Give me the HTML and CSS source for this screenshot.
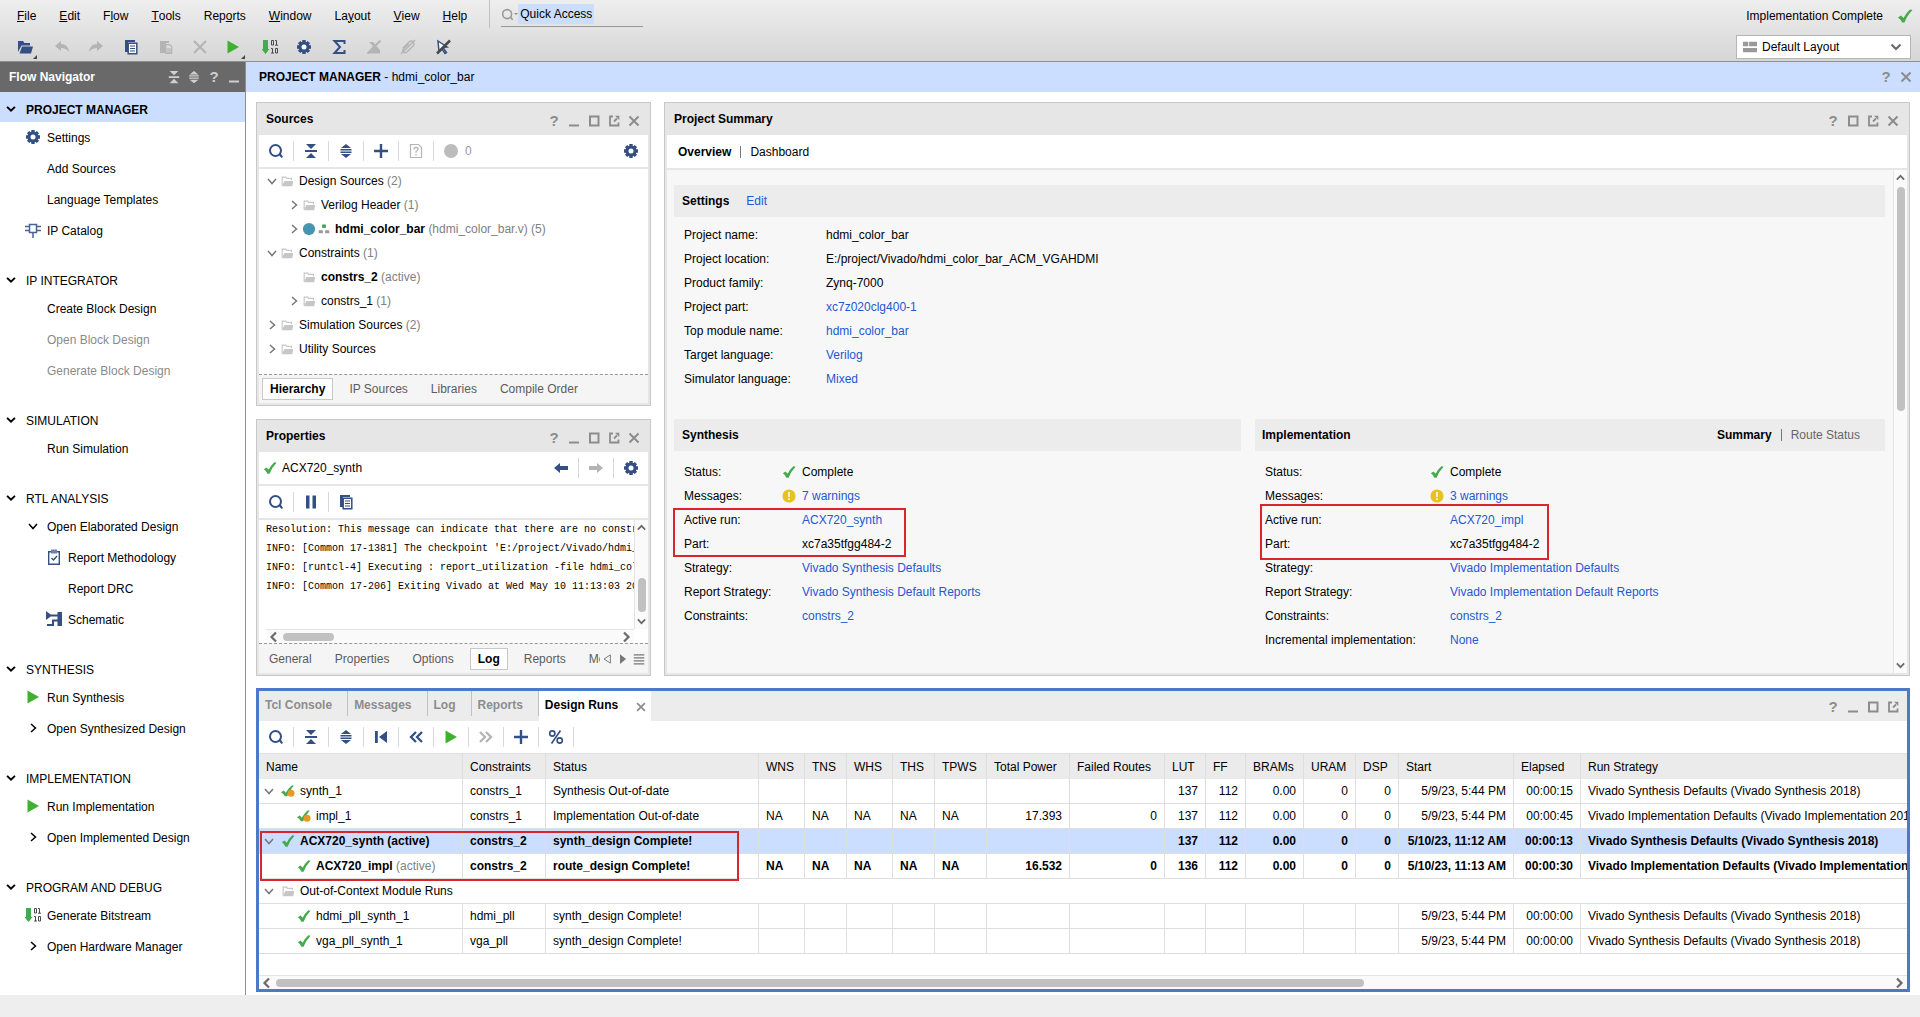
FILE: index.html
```html
<!DOCTYPE html>
<html lang="en">
<head>
<meta charset="utf-8">
<title>hdmi_color_bar - Vivado</title>
<link rel="stylesheet" href="styles.css">
</head>
<body>
<svg class="sprite" aria-hidden="true">
  <symbol id="min" viewBox="0 0 16 16"><path d="M3 12.500h10" stroke="currentColor" stroke-width="2" fill="none"/></symbol>
  <symbol id="max" viewBox="0 0 16 16"><rect x="4" y="3.500" width="8.500" height="9" stroke="currentColor" stroke-width="2" fill="none"/></symbol>
  <symbol id="float" viewBox="0 0 16 16"><path d="M7 3.500H4v9h8.500V9.500M8 8.500l3-3" stroke="currentColor" stroke-width="1.800" fill="none"/><path d="M9 2.700h4.300V7z" fill="currentColor"/></symbol>
  <symbol id="close" viewBox="0 0 16 16"><path d="M3.500 3.500l9 9M12.500 3.500l-9 9" stroke="currentColor" stroke-width="2" fill="none"/></symbol>
  <symbol id="search" viewBox="0 0 16 16"><circle cx="7.500" cy="7.500" r="5.500" stroke="currentColor" stroke-width="2" fill="none"/><path d="M10.500 11.500l2-1.500 2.500 4-1.500 1z" fill="currentColor"/></symbol>
  <symbol id="collapse" viewBox="0 0 16 16"><path d="M3 1h10L8 6zM3 15h10L8 10zM2 7h12v2H2z" fill="currentColor"/></symbol>
  <symbol id="expand" viewBox="0 0 16 16"><path d="M8 1l5 4H3zM8 15l5-4H3zM2.500 6h11v1.500h-11zM2.500 8.500h11V10h-11z" fill="currentColor"/></symbol>
  <symbol id="plus" viewBox="0 0 16 16"><path d="M8 1v14M1 8h14" stroke="currentColor" stroke-width="2.400" fill="none"/></symbol>
  <symbol id="helpdoc" viewBox="0 0 16 16"><path d="M2.500 1.500h8l3 3v10h-11z" stroke="currentColor" stroke-width="1.200" fill="none"/><path d="M6 6.500Q6 4.500 8 4.500t2 1.700Q10 7.500 8 8.500v1.200M8 11v1.500" stroke="currentColor" stroke-width="1.300" fill="none"/></symbol>
  <symbol id="gear" viewBox="0 0 16 16"><path d="M6.300 1h3.400v14H6.300zM1 6.300h14v3.400H1zM1.900 4.300l2.400-2.400 9.800 9.800-2.400 2.400zM11.700 1.900l2.400 2.400-9.800 9.800-2.400-2.400z" fill="currentColor"/><circle cx="8" cy="8" r="4" stroke="currentColor" stroke-width="3.200" fill="none"/><circle cx="8" cy="8" r="2.500" fill="#fff"/></symbol>
  <symbol id="dot" viewBox="0 0 16 16"><circle cx="8" cy="8" r="7" fill="currentColor"/></symbol>
  <symbol id="folder" viewBox="0 0 16 16"><path d="M2.500 13V3.500h4l1 1.500h5.500v2" stroke="#c6c6c6" stroke-width="1.300" fill="none"/><path d="M2 14l3-6h10l-1 6z" fill="#c6c6c6"/></symbol>
  <symbol id="down" viewBox="0 0 16 16"><path d="M4 6l4 4.500L12 6" stroke="currentColor" stroke-width="1.500" fill="none"/></symbol>
  <symbol id="right" viewBox="0 0 16 16"><path d="M6 4l4.500 4L6 12" stroke="currentColor" stroke-width="1.500" fill="none"/></symbol>
  <symbol id="down-bold" viewBox="0 0 16 16"><path d="M3.500 5.500l4.500 4.500 4.500-4.500" stroke="currentColor" stroke-width="2.200" fill="none"/></symbol>
  <symbol id="up-bold" viewBox="0 0 16 16"><path d="M3.500 10.500L8 6l4.500 4.500" stroke="currentColor" stroke-width="2.200" fill="none"/></symbol>
  <symbol id="left-bold" viewBox="0 0 16 16"><path d="M10 3.500L5.500 8l4.500 4.500" stroke="currentColor" stroke-width="2.200" fill="none"/></symbol>
  <symbol id="right-bold" viewBox="0 0 16 16"><path d="M6 3.500L10.500 8 6 12.500" stroke="currentColor" stroke-width="2.200" fill="none"/></symbol>
  <symbol id="check" viewBox="0 0 16 16"><path d="M1 9.500l3-2 2.500 2.500Q9 5 13 1.500l2.500.5Q10 7.500 7.500 14.500H5Q3.500 11 1 9.500z" fill="#45a94d"/></symbol>
  <symbol id="stale" viewBox="0 0 16 16"><path d="M0 9.500l3-2L5.500 10Q8.500 5 12.500 1.500l2 .5Q9.500 7.500 7 14H4.500Q3 11 0 9.500z" fill="#45a94d"/><circle cx="11.500" cy="10.500" r="4" fill="#e59a28"/></symbol>
  <symbol id="warn" viewBox="0 0 16 16"><circle cx="8" cy="8" r="7.500" fill="#e8c31d"/><path d="M8 3.500v5.500M8 10.500v2" stroke="#fff" stroke-width="1.800"/></symbol>
  <symbol id="top" viewBox="0 0 16 16"><rect x="5.500" y="2" width="5" height="4.500" fill="#3fa34d"/><path d="M1 9.500h5.500v4H1zM9.500 9.500H15v4H9.500z" fill="#999"/></symbol>
  <symbol id="back" viewBox="0 0 16 16"><path d="M1 8l6-5v3h8v4H7v3z" fill="currentColor"/></symbol>
  <symbol id="fwd" viewBox="0 0 16 16"><path d="M15 8L9 3v3H1v4h8v3z" fill="currentColor"/></symbol>
  <symbol id="pause" viewBox="0 0 16 16"><path d="M3 1.500h3.500v13H3zM9.500 1.500H13v13H9.500z" fill="currentColor"/></symbol>
  <symbol id="copy" viewBox="0 0 16 16"><path d="M2 1h10v2H5v10H2z" fill="currentColor"/><path d="M5.200 4.200h8.600v10.600H5.200z" stroke="currentColor" stroke-width="1.500" fill="#fff"/><path d="M7 7h5M7 9.500h5M7 12h5" stroke="currentColor" stroke-width="1.200"/></symbol>
  <symbol id="paste" viewBox="0 0 16 16"><path d="M2 2h9v2H8v10H2z" fill="currentColor"/><path d="M7.700 5.700h4l2 2v6.600h-6z" stroke="currentColor" stroke-width="1.200" fill="none"/><path d="M8.500 9h5v5.500h-5z" fill="currentColor" opacity=".6"/></symbol>
  <symbol id="first" viewBox="0 0 16 16"><path d="M2 2h2.800v12H2zM14 2v12L6 8z" fill="currentColor"/></symbol>
  <symbol id="rew" viewBox="0 0 16 16"><path d="M8 3L3 8l5 5M14 3L9 8l5 5" stroke="currentColor" stroke-width="2.300" fill="none"/></symbol>
  <symbol id="ffwd" viewBox="0 0 16 16"><path d="M2 3l5 5-5 5M8 3l5 5-5 5" stroke="currentColor" stroke-width="2.300" fill="none"/></symbol>
  <symbol id="play" viewBox="0 0 16 16"><path d="M2.500 1.500L14 8 2.500 14.500z" fill="#3fb02f"/></symbol>
  <symbol id="percent" viewBox="0 0 16 16"><g stroke="currentColor" fill="none" stroke-width="1.600"><circle cx="4.300" cy="4.500" r="2.600"/><circle cx="11.700" cy="11.500" r="2.600"/><path d="M12.500 1.500l-9 13"/></g></symbol>
  <symbol id="open" viewBox="0 0 16 16"><path d="M1 13V2h5l1.500 2H13v2.500H4.500z" fill="currentColor"/><path d="M2.500 14.500L5 7.500h11l-2 7z" fill="currentColor"/></symbol>
  <symbol id="undo" viewBox="0 0 16 16"><path d="M1 7l6-5v3q7 0 8 8-3-4-8-4v3z" fill="currentColor"/></symbol>
  <symbol id="redo" viewBox="0 0 16 16"><path d="M15 7L9 2v3Q2 5 1 13q3-4 8-4v3z" fill="currentColor"/></symbol>
  <symbol id="delete" viewBox="0 0 16 16"><path d="M2 2l12 12M14 2L2 14" stroke="currentColor" stroke-width="2.200"/></symbol>
  <symbol id="bits" viewBox="0 0 16 16"><path d="M1 1h5v9h1.500l-4 5-4-5H1z" fill="#45a94d"/><path d="M9.500 1.500h2v4.500h-2zM13 1.500h1.500V6M13 6.200h3M9 9.500h1.500V14M9 14h3M13.500 9.500h2V14h-2z" stroke="#4b4b4b" stroke-width="1" fill="none"/></symbol>
  <symbol id="sigma" viewBox="0 0 16 16"><path d="M13.500 5V2H3.500l5.500 6-5.500 6h10v-3" stroke="currentColor" stroke-width="2" fill="none"/></symbol>
  <symbol id="unroute" viewBox="0 0 16 16"><path d="M2 14.500L7 7 3 3h4l7 8v3.500z" fill="currentColor"/><path d="M14.500 1.500l-13 13" stroke="currentColor" stroke-width="2"/></symbol>
  <symbol id="clip" viewBox="0 0 16 16"><path d="M3 9l6-6q2-2 4 0t0 4l-6 6q-2 1.500-3.500 0T3.500 10L9 4.500" stroke="currentColor" stroke-width="1.500" fill="none"/><path d="M15 1L1 15" stroke="currentColor" stroke-width="1.500"/></symbol>
  <symbol id="nocursor" viewBox="0 0 16 16"><path d="M3 2l9 6-4 .5 3.500 5-1.500 1L7 10l-3 2.500z" fill="#fff" stroke="#33507f" stroke-width="1.500"/><path d="M15 1.500L2 14.500" stroke="#484848" stroke-width="2.500"/></symbol>
  <symbol id="layout" viewBox="0 0 16 16"><path d="M0 2h6v5H0zM7 2h9v5H7zM0 9h16v5H0z" fill="#999"/></symbol>
  <symbol id="chip" viewBox="0 0 16 16"><path d="M4.500 2.500h7v8h-7zM0 4.500h4.500M0 8.500h4.500M11.500 4.500H16M11.500 8.500H16M8 10.500V16" stroke="#4a6391" stroke-width="1.500" fill="none"/></symbol>
  <symbol id="clipboard" viewBox="0 0 16 16"><path d="M2.700 2.700h10.600v12.600H2.700z" stroke="#33507f" stroke-width="1.400" fill="none"/><path d="M5 .500h6v4H5z" fill="#6f84aa"/><path d="M5.500 9l2 2 3.500-4" stroke="#33507f" stroke-width="1.400" fill="none"/></symbol>
  <symbol id="schematic" viewBox="0 0 16 16"><path d="M0 0l6 4.500L0 9zM11.500 1H16v14h-4.500z" fill="#33507f"/><path d="M5 4.500h7M1 14h6V9.500h5" stroke="#33507f" stroke-width="2" fill="none"/></symbol>
  <symbol id="lines" viewBox="0 0 16 16"><path d="M1 2.500h14M1 6.500h14M1 10.500h14M1 14.500h14" stroke="currentColor" stroke-width="1.800"/></symbol>
  <symbol id="tri-left" viewBox="0 0 16 16"><path d="M12.500 2.500v11L4 8z" stroke="currentColor" stroke-width="1.300" fill="none"/></symbol>
  <symbol id="tri-right" viewBox="0 0 16 16"><path d="M4 1.500v13L12 8z" fill="currentColor"/></symbol>
</svg>

<header class="top">
  <div class="menu-row">
    <nav class="menus" aria-label="Main menu">
      <button><u>F</u>ile</button><button><u>E</u>dit</button><button>F<u>l</u>ow</button><button><u>T</u>ools</button><button>Rep<u>o</u>rts</button><button><u>W</u>indow</button><button>La<u>y</u>out</button><button><u>V</u>iew</button><button><u>H</u>elp</button>
    </nav>
    <label class="quick"><svg class="icon"><use href="#search"/></svg><span class="caret"></span><input type="text" value="Quick Access" aria-label="Quick Access"></label>
    <div class="run-state">Implementation Complete <svg class="icon"><use href="#check"/></svg></div>
  </div>
  <div class="tool-row">
    <div class="tools">
      <button class="more" aria-label="Open"><svg class="icon"><use href="#open"/></svg></button>
      <button class="off" aria-label="Undo"><svg class="icon"><use href="#undo"/></svg></button>
      <button class="off" aria-label="Redo"><svg class="icon"><use href="#redo"/></svg></button>
      <button aria-label="Copy"><svg class="icon"><use href="#copy"/></svg></button>
      <button class="off" aria-label="Paste"><svg class="icon"><use href="#paste"/></svg></button>
      <button class="off" aria-label="Delete"><svg class="icon"><use href="#delete"/></svg></button>
      <button class="more" aria-label="Run"><svg class="icon"><use href="#play"/></svg></button>
      <button aria-label="Generate Bitstream"><svg class="icon"><use href="#bits"/></svg></button>
      <button aria-label="Settings"><svg class="icon"><use href="#gear"/></svg></button>
      <button aria-label="Report"><svg class="icon"><use href="#sigma"/></svg></button>
      <button class="off" aria-label="Unroute"><svg class="icon"><use href="#unroute"/></svg></button>
      <button class="off" aria-label="Unlink"><svg class="icon"><use href="#clip"/></svg></button>
      <button aria-label="Clear selection"><svg class="icon"><use href="#nocursor"/></svg></button>
    </div>
    <div class="layout-pick">
      <svg class="icon"><use href="#layout"/></svg>
      <select aria-label="Layout"><option>Default Layout</option></select>
      <svg class="icon arrow"><use href="#down-bold"/></svg>
    </div>
  </div>
</header>

<div class="body">
  <aside class="flow">
    <div class="flow-head"><h2>Flow Navigator</h2>
      <button aria-label="Collapse all"><svg class="icon small"><use href="#collapse"/></svg></button>
      <button aria-label="Expand all"><svg class="icon small"><use href="#expand"/></svg></button>
      <button class="ask" aria-label="Help">?</button>
      <button aria-label="Minimize"><svg class="icon"><use href="#min"/></svg></button>
    </div>
    <nav class="flow-list" aria-label="Flow Navigator">
      <section class="current">
        <button class="group"><svg class="icon"><use href="#down-bold"/></svg>PROJECT MANAGER</button>
        <button><svg class="icon navy"><use href="#gear"/></svg>Settings</button>
        <button><i class="icon"></i>Add Sources</button>
        <button><i class="icon"></i>Language Templates</button>
        <button><svg class="icon"><use href="#chip"/></svg>IP Catalog</button>
      </section>
      <section>
        <button class="group"><svg class="icon"><use href="#down-bold"/></svg>IP INTEGRATOR</button>
        <button><i class="icon"></i>Create Block Design</button>
        <button disabled><i class="icon"></i>Open Block Design</button>
        <button disabled><i class="icon"></i>Generate Block Design</button>
      </section>
      <section>
        <button class="group"><svg class="icon"><use href="#down-bold"/></svg>SIMULATION</button>
        <button><i class="icon"></i>Run Simulation</button>
      </section>
      <section>
        <button class="group"><svg class="icon"><use href="#down-bold"/></svg>RTL ANALYSIS</button>
        <button><svg class="icon"><use href="#down"/></svg>Open Elaborated Design</button>
        <button class="sub"><svg class="icon"><use href="#clipboard"/></svg>Report Methodology</button>
        <button class="sub"><i class="icon"></i>Report DRC</button>
        <button class="sub"><svg class="icon"><use href="#schematic"/></svg>Schematic</button>
      </section>
      <section>
        <button class="group"><svg class="icon"><use href="#down-bold"/></svg>SYNTHESIS</button>
        <button><svg class="icon"><use href="#play"/></svg>Run Synthesis</button>
        <button><svg class="icon"><use href="#right"/></svg>Open Synthesized Design</button>
      </section>
      <section>
        <button class="group"><svg class="icon"><use href="#down-bold"/></svg>IMPLEMENTATION</button>
        <button><svg class="icon"><use href="#play"/></svg>Run Implementation</button>
        <button><svg class="icon"><use href="#right"/></svg>Open Implemented Design</button>
      </section>
      <section>
        <button class="group"><svg class="icon"><use href="#down-bold"/></svg>PROGRAM AND DEBUG</button>
        <button><svg class="icon"><use href="#bits"/></svg>Generate Bitstream</button>
        <button><svg class="icon"><use href="#right"/></svg>Open Hardware Manager</button>
      </section>
    </nav>
  </aside>

  <main>
    <div class="main-head">
      <h1><b>PROJECT MANAGER</b> - hdmi_color_bar</h1>
      <button class="ask" aria-label="Help">?</button>
      <button aria-label="Close"><svg class="icon"><use href="#close"/></svg></button>
    </div>
    <div class="work">
      <div class="upper">
        <div class="left-col">
          <section class="panel">
            <div class="panel-head"><h2>Sources</h2>
              <div class="win"><button class="ask" aria-label="Help">?</button><button aria-label="Minimize"><svg class="icon"><use href="#min"/></svg></button><button aria-label="Maximize"><svg class="icon"><use href="#max"/></svg></button><button aria-label="Float"><svg class="icon"><use href="#float"/></svg></button><button aria-label="Close"><svg class="icon"><use href="#close"/></svg></button></div>
            </div>
            <div class="bar">
              <button aria-label="Search"><svg class="icon"><use href="#search"/></svg></button>
              <button aria-label="Collapse all"><svg class="icon"><use href="#collapse"/></svg></button>
              <button aria-label="Expand all"><svg class="icon"><use href="#expand"/></svg></button>
              <button aria-label="Add"><svg class="icon"><use href="#plus"/></svg></button>
              <button class="off" aria-label="Missing sources"><svg class="icon"><use href="#helpdoc"/></svg></button>
              <button class="off count"><svg class="icon"><use href="#dot"/></svg>0</button>
              <button class="end" aria-label="Settings"><svg class="icon"><use href="#gear"/></svg></button>
            </div>
            <ul class="tree">
              <li><svg class="icon tw"><use href="#down"/></svg><svg class="icon small"><use href="#folder"/></svg><span>Design Sources <em>(2)</em></span></li>
              <li class="in"><svg class="icon tw"><use href="#right"/></svg><svg class="icon small"><use href="#folder"/></svg><span>Verilog Header <em>(1)</em></span></li>
              <li class="in"><svg class="icon tw"><use href="#right"/></svg><svg class="icon small teal"><use href="#dot"/></svg><svg class="icon mini"><use href="#top"/></svg><span><b>hdmi_color_bar</b> <em>(hdmi_color_bar.v) (5)</em></span></li>
              <li><svg class="icon tw"><use href="#down"/></svg><svg class="icon small"><use href="#folder"/></svg><span>Constraints <em>(1)</em></span></li>
              <li class="in"><i class="icon tw"></i><svg class="icon small"><use href="#folder"/></svg><span><b>constrs_2</b> <em>(active)</em></span></li>
              <li class="in"><svg class="icon tw"><use href="#right"/></svg><svg class="icon small"><use href="#folder"/></svg><span>constrs_1 <em>(1)</em></span></li>
              <li><svg class="icon tw"><use href="#right"/></svg><svg class="icon small"><use href="#folder"/></svg><span>Simulation Sources <em>(2)</em></span></li>
              <li><svg class="icon tw"><use href="#right"/></svg><svg class="icon small"><use href="#folder"/></svg><span>Utility Sources</span></li>
            </ul>
            <div class="foot-tabs"><button class="on">Hierarchy</button><button>IP Sources</button><button>Libraries</button><button>Compile Order</button></div>
          </section>

          <section class="panel grow">
            <div class="panel-head"><h2>Properties</h2>
              <div class="win"><button class="ask" aria-label="Help">?</button><button aria-label="Minimize"><svg class="icon"><use href="#min"/></svg></button><button aria-label="Maximize"><svg class="icon"><use href="#max"/></svg></button><button aria-label="Float"><svg class="icon"><use href="#float"/></svg></button><button aria-label="Close"><svg class="icon"><use href="#close"/></svg></button></div>
            </div>
            <div class="bar">
              <div class="subject"><svg class="icon small"><use href="#check"/></svg>ACX720_synth</div>
              <button aria-label="Back"><svg class="icon"><use href="#back"/></svg></button>
              <button class="off" aria-label="Forward"><svg class="icon"><use href="#fwd"/></svg></button>
              <button class="last" aria-label="Settings"><svg class="icon"><use href="#gear"/></svg></button>
            </div>
            <div class="bar">
              <button aria-label="Search"><svg class="icon"><use href="#search"/></svg></button>
              <button aria-label="Pause"><svg class="icon"><use href="#pause"/></svg></button>
              <button class="last" aria-label="Copy"><svg class="icon"><use href="#copy"/></svg></button>
            </div>
            <div class="log">
              <pre>Resolution: This message can indicate that there are no constraints
INFO: [Common 17-1381] The checkpoint 'E:/project/Vivado/hdmi_color_bar
INFO: [runtcl-4] Executing : report_utilization -file hdmi_color_bar
INFO: [Common 17-206] Exiting Vivado at Wed May 10 11:13:03 2023...</pre>
              <div class="vscroll" aria-hidden="true"><svg class="icon"><use href="#up-bold"/></svg><span class="log-v"></span><svg class="icon"><use href="#down-bold"/></svg></div>
              <div class="hscroll" aria-hidden="true"><svg class="icon"><use href="#left-bold"/></svg><span class="log-h"></span><svg class="icon"><use href="#right-bold"/></svg></div>
            </div>
            <div class="foot-tabs tight"><button>General</button><button>Properties</button><button>Options</button><button class="on">Log</button><button>Reports</button><button class="cut">Messages</button>
              <div class="tab-nav"><button aria-label="Previous tabs"><svg class="icon mini"><use href="#tri-left"/></svg></button><button aria-label="Next tabs"><svg class="icon mini"><use href="#tri-right"/></svg></button><button aria-label="Tab list"><svg class="icon mini"><use href="#lines"/></svg></button></div>
            </div>
          </section>
        </div>

        <section class="panel summary">
          <div class="panel-head"><h2>Project Summary</h2>
            <div class="win"><button class="ask" aria-label="Help">?</button><button aria-label="Maximize"><svg class="icon"><use href="#max"/></svg></button><button aria-label="Float"><svg class="icon"><use href="#float"/></svg></button><button aria-label="Close"><svg class="icon"><use href="#close"/></svg></button></div>
          </div>
          <div class="views"><button class="on">Overview</button><span class="rule"></span><button>Dashboard</button></div>
          <div class="scroller">
            <div class="report">
              <div class="strip"><h3>Settings</h3><a href="#edit">Edit</a></div>
              <dl class="facts wide">
                <dt>Project name:</dt><dd>hdmi_color_bar</dd>
                <dt>Project location:</dt><dd>E:/project/Vivado/hdmi_color_bar_ACM_VGAHDMI</dd>
                <dt>Product family:</dt><dd>Zynq-7000</dd>
                <dt>Project part:</dt><dd><a href="#part">xc7z020clg400-1</a></dd>
                <dt>Top module name:</dt><dd><a href="#top-module">hdmi_color_bar</a></dd>
                <dt>Target language:</dt><dd><a href="#language">Verilog</a></dd>
                <dt>Simulator language:</dt><dd><a href="#simulator">Mixed</a></dd>
              </dl>
              <div class="pair">
                <div class="stage">
                  <div class="strip"><h3>Synthesis</h3></div>
                  <dl class="facts synth">
                    <dt>Status:</dt><dd class="flag"><svg class="icon small"><use href="#check"/></svg>Complete</dd>
                    <dt>Messages:</dt><dd class="flag"><svg class="icon small"><use href="#warn"/></svg><a href="#w7">7 warnings</a></dd>
                    <dt>Active run:</dt><dd><a href="#synth">ACX720_synth</a></dd>
                    <dt>Part:</dt><dd>xc7a35tfgg484-2</dd>
                    <dt>Strategy:</dt><dd><a href="#s1">Vivado Synthesis Defaults</a></dd>
                    <dt>Report Strategy:</dt><dd><a href="#s2">Vivado Synthesis Default Reports</a></dd>
                    <dt>Constraints:</dt><dd><a href="#s3">constrs_2</a></dd>
                  </dl>
                  <span class="mark mark-synth"></span>
                </div>
                <div class="stage">
                  <div class="strip impl-strip"><h3>Implementation</h3><div class="switch"><button class="on">Summary</button><span class="rule"></span><button>Route Status</button></div></div>
                  <dl class="facts impl">
                    <dt>Status:</dt><dd class="flag"><svg class="icon small"><use href="#check"/></svg>Complete</dd>
                    <dt>Messages:</dt><dd class="flag"><svg class="icon small"><use href="#warn"/></svg><a href="#w3">3 warnings</a></dd>
                    <dt>Active run:</dt><dd><a href="#impl">ACX720_impl</a></dd>
                    <dt>Part:</dt><dd>xc7a35tfgg484-2</dd>
                    <dt>Strategy:</dt><dd><a href="#i1">Vivado Implementation Defaults</a></dd>
                    <dt>Report Strategy:</dt><dd><a href="#i2">Vivado Implementation Default Reports</a></dd>
                    <dt>Constraints:</dt><dd><a href="#i3">constrs_2</a></dd>
                    <dt>Incremental implementation:</dt><dd><a href="#i4">None</a></dd>
                  </dl>
                  <span class="mark mark-impl"></span>
                </div>
              </div>
            </div>
            <div class="vscroll" aria-hidden="true"><svg class="icon"><use href="#up-bold"/></svg><span class="sum-v"></span><svg class="icon"><use href="#down-bold"/></svg></div>
          </div>
        </section>
      </div>

      <section class="runs">
        <div class="run-tabs">
          <button>Tcl Console</button><button>Messages</button><button>Log</button><button>Reports</button><button class="on">Design Runs<svg class="icon small"><use href="#close"/></svg></button>
          <div class="win"><button class="ask" aria-label="Help">?</button><button aria-label="Minimize"><svg class="icon"><use href="#min"/></svg></button><button aria-label="Maximize"><svg class="icon"><use href="#max"/></svg></button><button aria-label="Float"><svg class="icon"><use href="#float"/></svg></button></div>
        </div>
        <div class="bar flat">
          <button aria-label="Search"><svg class="icon"><use href="#search"/></svg></button>
          <button aria-label="Collapse all"><svg class="icon"><use href="#collapse"/></svg></button>
          <button aria-label="Expand all"><svg class="icon"><use href="#expand"/></svg></button>
          <button aria-label="First"><svg class="icon"><use href="#first"/></svg></button>
          <button aria-label="Previous"><svg class="icon"><use href="#rew"/></svg></button>
          <button aria-label="Launch"><svg class="icon"><use href="#play"/></svg></button>
          <button class="off" aria-label="Next"><svg class="icon"><use href="#ffwd"/></svg></button>
          <button aria-label="Create runs"><svg class="icon"><use href="#plus"/></svg></button>
          <button aria-label="Show percentage"><svg class="icon"><use href="#percent"/></svg></button>
        </div>
        <div class="grid">
          <table>
            <colgroup><col class="w-name"><col class="w-83"><col class="w-status"><col class="w-46"><col class="w-42"><col class="w-46"><col class="w-42"><col class="w-52"><col class="w-83"><col class="w-95"><col class="w-41"><col class="w-40"><col class="w-58"><col class="w-52"><col class="w-43"><col class="w-start"><col class="w-67"><col></colgroup>
            <thead><tr><th>Name</th><th>Constraints</th><th>Status</th><th>WNS</th><th>TNS</th><th>WHS</th><th>THS</th><th>TPWS</th><th>Total Power</th><th>Failed Routes</th><th>LUT</th><th>FF</th><th>BRAMs</th><th>URAM</th><th>DSP</th><th>Start</th><th>Elapsed</th><th>Run Strategy</th></tr></thead>
            <tbody>
              <tr><td><div class="name"><svg class="icon tw"><use href="#down"/></svg><svg class="icon small"><use href="#stale"/></svg>synth_1</div></td><td>constrs_1</td><td>Synthesis Out-of-date</td><td></td><td></td><td></td><td></td><td></td><td></td><td></td><td class="n">137</td><td class="n">112</td><td class="n">0.00</td><td class="n">0</td><td class="n">0</td><td class="n">5/9/23, 5:44 PM</td><td class="n">00:00:15</td><td>Vivado Synthesis Defaults (Vivado Synthesis 2018)</td></tr>
              <tr><td><div class="name kid"><svg class="icon small"><use href="#stale"/></svg>impl_1</div></td><td>constrs_1</td><td>Implementation Out-of-date</td><td>NA</td><td>NA</td><td>NA</td><td>NA</td><td>NA</td><td class="n">17.393</td><td class="n">0</td><td class="n">137</td><td class="n">112</td><td class="n">0.00</td><td class="n">0</td><td class="n">0</td><td class="n">5/9/23, 5:44 PM</td><td class="n">00:00:45</td><td>Vivado Implementation Defaults (Vivado Implementation 2018)</td></tr>
              <tr class="strong picked"><td><div class="name"><svg class="icon tw"><use href="#down"/></svg><svg class="icon small"><use href="#check"/></svg>ACX720_synth (active)</div></td><td>constrs_2</td><td>synth_design Complete!</td><td></td><td></td><td></td><td></td><td></td><td></td><td></td><td class="n">137</td><td class="n">112</td><td class="n">0.00</td><td class="n">0</td><td class="n">0</td><td class="n">5/10/23, 11:12 AM</td><td class="n">00:00:13</td><td>Vivado Synthesis Defaults (Vivado Synthesis 2018)</td></tr>
              <tr class="strong"><td><div class="name kid"><svg class="icon small"><use href="#check"/></svg><span>ACX720_impl <em>(active)</em></span></div></td><td>constrs_2</td><td>route_design Complete!</td><td>NA</td><td>NA</td><td>NA</td><td>NA</td><td>NA</td><td class="n">16.532</td><td class="n">0</td><td class="n">136</td><td class="n">112</td><td class="n">0.00</td><td class="n">0</td><td class="n">0</td><td class="n">5/10/23, 11:13 AM</td><td class="n">00:00:30</td><td>Vivado Implementation Defaults (Vivado Implementation 2018)</td></tr>
              <tr><td colspan="18"><div class="name"><svg class="icon tw"><use href="#down"/></svg><svg class="icon small"><use href="#folder"/></svg>Out-of-Context Module Runs</div></td></tr>
              <tr><td><div class="name kid"><svg class="icon small"><use href="#check"/></svg>hdmi_pll_synth_1</div></td><td>hdmi_pll</td><td>synth_design Complete!</td><td></td><td></td><td></td><td></td><td></td><td></td><td></td><td></td><td></td><td></td><td></td><td></td><td class="n">5/9/23, 5:44 PM</td><td class="n">00:00:00</td><td>Vivado Synthesis Defaults (Vivado Synthesis 2018)</td></tr>
              <tr><td><div class="name kid"><svg class="icon small"><use href="#check"/></svg>vga_pll_synth_1</div></td><td>vga_pll</td><td>synth_design Complete!</td><td></td><td></td><td></td><td></td><td></td><td></td><td></td><td></td><td></td><td></td><td></td><td></td><td class="n">5/9/23, 5:44 PM</td><td class="n">00:00:00</td><td>Vivado Synthesis Defaults (Vivado Synthesis 2018)</td></tr>
            </tbody>
          </table>
          <span class="mark mark-runs"></span>
        </div>
        <div class="hscroll" aria-hidden="true"><svg class="icon"><use href="#left-bold"/></svg><span class="run-h"></span><svg class="icon"><use href="#right-bold"/></svg></div>
      </section>
    </div>
  </main>
</div>
<footer class="status"></footer>
</body>
</html>
```
FILE: styles.css
```css
* { box-sizing: border-box; }
body {
  margin: 0;
  min-height: 100vh;
  display: flex;
  flex-direction: column;
  background: #fff;
  color: #000;
  font: 12px/16px "Liberation Sans", Arial, sans-serif;
}
h1, h2, h3, ul, dl, dd, pre { margin: 0; padding: 0; }
h1, h2, h3 { font-size: 12px; line-height: 16px; }
em { font-style: normal; font-weight: 400; color: #808080; }
a { color: #2458d3; text-decoration: none; }
button, input, select { font: inherit; color: inherit; background: none; border: 0; padding: 0; margin: 0; border-radius: 0; }
button { display: inline-flex; align-items: center; white-space: nowrap; }
.sprite { display: none; }
.icon { width: 16px; height: 16px; flex: none; display: block; }
.icon.small { width: 14px; height: 14px; }
.icon.mini { width: 12px; height: 12px; }
.ask { font-weight: 700; font-size: 15px; justify-content: center; width: 16px; }
.navy { color: #344f84; }
.off { color: #b4b4b4; }

/* Menu and main toolbar */
.top { background: linear-gradient(#eeeeee, #d6d6d6); border-bottom: 1px solid #8f8f8f; height: 62px; }
.menu-row { display: flex; height: 31px; align-items: center; padding: 0 7px 0 17px; }
.menus { display: flex; gap: 23px; }
.quick { position: relative; display: flex; align-items: center; height: 28px; margin: 0 0 3px 22px; padding: 0 49px 0 11px; border-left: 1px solid #c2c2c2; }
.quick .icon { width: 13px; height: 13px; color: #9a9a9a; }
.quick .caret { border: 2px solid transparent; border-top-color: #8a8a8a; border-bottom: 0; }
.quick input { background: #cbdeff; width: 76px; padding: 0 2px; height: 20px; }
.quick::after { content: ""; position: absolute; left: 11px; right: 0; bottom: 1px; border-bottom: 1px solid #9a9a9a; }
.run-state { margin-left: auto; display: flex; align-items: center; gap: 14px; }
.tool-row { display: flex; height: 31px; align-items: center; justify-content: space-between; padding: 1px 9px 0 17px; }
.tools { display: flex; justify-content: space-between; width: 436px; color: #344f84; }
.tools button { width: 20px; height: 24px; justify-content: center; }
.tools .off { color: #b4b4b4; }
.tools .more::after { content: ""; border: 2px solid transparent; border-right-color: #444; border-bottom-color: #444; align-self: flex-end; }
.layout-pick { display: flex; align-items: center; background: #fff; border: 1px solid #b5b5b5; width: 175px; height: 24px; padding: 0 6px; gap: 5px; }
.layout-pick .icon:first-child { width: 14px; height: 14px; }
.layout-pick select { appearance: none; flex: 1; height: 22px; outline: none; }
.layout-pick .arrow { color: #6a6a6a; }

.body { display: flex; flex: 1; }
.status { height: 22px; background: #eee; }

/* Flow navigator */
.flow { width: 246px; flex: none; border-right: 1px solid #8d8d8d; }
.flow-head { display: flex; align-items: center; gap: 4px; height: 30px; padding: 0 3px 0 9px; background: #696969; color: #fff; }
.flow-head h2 { margin-right: auto; }
.flow-head button { width: 16px; justify-content: center; color: #cfcfcf; }
.flow-list { display: flex; flex-direction: column; gap: 22px; }
.flow-list section { display: flex; flex-direction: column; }
.flow-list button { height: 31px; gap: 6px; padding-left: 25px; }
.flow-list button .icon { margin-bottom: 2px; }
.flow-list .group { height: 25px; gap: 8px; padding-left: 4px; }
.flow-list .group .icon { width: 14px; height: 14px; }
.flow-list .sub { padding-left: 46px; }
.flow-list button:disabled { color: #8a8a8a; }
.flow-list .current .group { height: 30px; padding-top: 5px; background: #cbdeff; font-weight: 700; }

/* Main area */
main { flex: 1; min-width: 0; display: flex; flex-direction: column; }
.main-head { display: flex; align-items: center; gap: 4px; height: 30px; padding: 0 6px 0 13px; background: #cbdeff; }
.main-head h1 { flex: 1; font-weight: 400; }
.main-head button, .win button { color: #8c8c8c; }
.work { flex: 1; display: flex; flex-direction: column; gap: 12px; padding: 10px 10px 3px; }
.upper { flex: 1; display: flex; gap: 13px; }
.left-col { width: 395px; flex: none; display: flex; flex-direction: column; gap: 13px; }
.panel { display: flex; flex-direction: column; background: #e6e6e6; border: 1px solid #c8c8c8; padding: 0 2px 2px; }
.grow { flex: 1; }
.panel-head { display: flex; align-items: center; justify-content: space-between; height: 32px; padding: 0 6px 0 7px; }
.win { display: flex; gap: 4px; padding-top: 4px; }

.bar { display: flex; align-items: center; height: 34px; background: #fff; border-bottom: 2px solid #e6e6e6; color: #344f84; }
.bar.flat { height: 32px; border-bottom: 0; }
.bar button { width: 35px; height: 20px; justify-content: center; border-right: 1px solid #d8d8d8; }
.bar .off { color: #b4b4b4; }
.bar .count { width: auto; padding-left: 9px; gap: 6px; border: 0; color: #999; }
.bar .count .icon { color: #bcbcbc; }
.bar .end { margin-left: auto; border: 0; width: 34px; }
.bar .last { border: 0; width: 34px; }
.subject { flex: 1; display: flex; align-items: center; gap: 5px; padding-left: 4px; color: #000; }

.tree { list-style: none; background: #fff; padding-bottom: 13px; }
.tree li { display: flex; align-items: center; height: 24px; padding-left: 5px; white-space: nowrap; }
.tree li.in { padding-left: 27px; }
.tree span { margin-left: 5px; }
.tree .mini { margin-left: 2px; }
.tree .teal { color: #4795ae; }
.tw { color: #777; }

.foot-tabs { display: flex; align-items: center; gap: 9px; height: 29px; padding-left: 3px; background: #f5f5f5; border-top: 1px dashed #999; color: #5c5c5c; }
.foot-tabs button { flex: none; height: 22px; padding: 0 7px; }
.foot-tabs button.on { background: #fff; border: 1px solid #c8c8c8; color: #000; font-weight: 700; }
.foot-tabs.tight { height: 30px; }
.tight .cut { display: block; width: 18px; margin-right: -9px; padding-right: 0; overflow: hidden; }
.tab-nav { display: flex; gap: 4px; margin-left: auto; padding-right: 3px; color: #777; }
.foot-tabs .tab-nav button { padding: 0; }

.log { flex: 1; display: grid; grid-template-columns: 1fr 14px; grid-template-rows: 1fr 14px; min-height: 110px; padding-left: 7px; background: #fff; }
.log pre { overflow: hidden; font: 10px/19px "Liberation Mono", monospace; min-width: 0; }
.vscroll { display: flex; flex-direction: column; align-items: center; background: #fafafa; border-left: 1px solid #e4e4e4; color: #6a6a6a; padding: 1px 0; }
.vscroll .icon { width: 13px; height: 13px; }
.vscroll span { width: 8px; border-radius: 4px; background: #c1c1c1; }
.vscroll .icon:last-child { margin-top: auto; }
.log-v { height: 34px; margin-top: 44px; }
.sum-v { height: 224px; margin-top: 3px; }
.hscroll { display: flex; align-items: center; height: 14px; background: #fafafa; border-top: 1px solid #e4e4e4; color: #6a6a6a; }
.hscroll span { height: 8px; border-radius: 4px; background: #c1c1c1; }
.hscroll .icon:last-child { margin-left: auto; }
.log-h { width: 51px; margin-left: 1px; }

/* Project summary */
.summary { flex: 1; min-width: 0; }
.views { display: flex; align-items: center; height: 35px; padding-left: 11px; background: #fff; border-bottom: 2px solid #e6e6e6; }
.rule { width: 1px; height: 12px; background: #777; margin: 0 9px; }
.on { font-weight: 700; }
.scroller { flex: 1; display: flex; background: #f7f7f7; }
.report { flex: 1; padding: 15px 8px 0 7px; }
.scroller .vscroll { width: 14px; }
.strip { display: flex; align-items: center; gap: 17px; height: 32px; padding: 0 8px; background: #ececec; }
.impl-strip { padding: 0 25px 0 7px; }
.switch { display: flex; align-items: center; margin-left: auto; }
.switch button:last-child { color: #666; }
.facts { display: grid; grid-auto-rows: 24px; align-items: center; padding-left: 10px; white-space: nowrap; }
.facts dd { padding-left: 20px; }
.facts dd.flag { display: flex; align-items: center; gap: 6px; padding-left: 0; }
.wide { grid-template-columns: 142px 1fr; margin: 6px 0 28px; }
.wide dd { padding-left: 0; }
.synth { grid-template-columns: 98px 1fr; }
.impl { grid-template-columns: 165px 1fr; }
.pair { display: grid; grid-template-columns: 9fr 10fr; gap: 14px; }
.stage { position: relative; }
.stage .facts { margin-top: 9px; }

/* Highlight boxes laid over the content */
.mark { position: absolute; border: 2px solid #d8262c; pointer-events: none; }
.mark-synth { left: -1px; top: 89px; width: 233px; height: 49px; }
.mark-impl { left: 5px; top: 85px; width: 289px; height: 56px; }
.mark-runs { left: 1px; top: 78px; width: 479px; height: 50px; }

/* Design runs */
.runs { border: 3px solid #4d7ac4; background: #fff; }
.run-tabs { display: flex; height: 30px; background: #ececec; color: #8c8c8c; }
.run-tabs > button { font-weight: 700; padding: 2px 15px 0 6px; border-right: 1px solid #c0c0c0; height: 25px; }
.run-tabs > button.on { height: 30px; gap: 16px; padding: 0 3px 2px 6px; background: #fff; color: #000; border: 0; }
.run-tabs > button .icon { color: #8c8c8c; margin-top: 4px; }
.run-tabs .win { margin-left: auto; padding: 2px 6px 0 0; align-items: center; }
.grid { position: relative; overflow: hidden; padding-bottom: 21px; }
table { width: 100%; table-layout: fixed; border-collapse: separate; border-spacing: 0; }
th, td { overflow: hidden; white-space: nowrap; text-align: left; padding: 0 7px; border-right: 1px solid #dedede; }
th { height: 26px; font-weight: 400; background: #ebebeb; border-top: 1px solid #e0e0e0; }
td { height: 25px; border-bottom: 1px solid #dedede; }
th:last-child, td:last-child { border-right: 0; padding-right: 0; }
td.n { text-align: right; }
td:first-child { padding-left: 2px; }
.strong { font-weight: 700; }
.picked td { background: #cbdeff; }
.name { display: flex; align-items: center; }
.name .small { margin: 0 5px 0 4px; }
.name.kid { padding-left: 32px; }
.w-name { width: 204px; }
.w-status { width: 213px; }
.w-start { width: 115px; }
.w-95 { width: 95px; }
.w-83 { width: 83px; }
.w-67 { width: 67px; }
.w-58 { width: 58px; }
.w-52 { width: 52px; }
.w-46 { width: 46px; }
.w-43 { width: 43px; }
.w-42 { width: 42px; }
.w-41 { width: 41px; }
.w-40 { width: 40px; }
.run-h { width: 66%; margin-left: 1px; }
```
